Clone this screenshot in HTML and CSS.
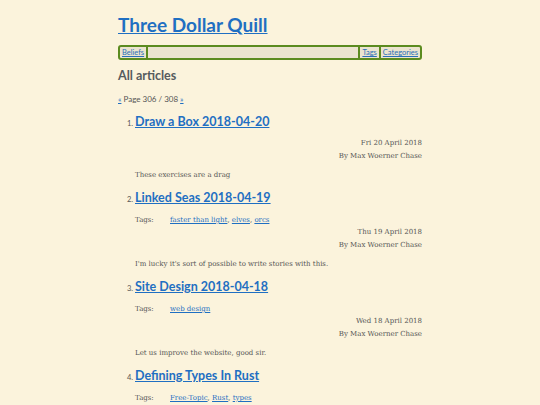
FILE: index.html
```html
<!DOCTYPE html>
<html lang="en">
<head>
<meta charset="utf-8">
<title>Three Dollar Quill</title>
<link rel="stylesheet" href="styles.css">
</head>
<body>
<div class="page">
  <h1 class="site-title"><a href="#">Three Dollar Quill</a></h1>
  <nav class="nav">
    <a class="nav-item" href="#">Beliefs</a>
    <span class="nav-item nav-spacer"></span>
    <a class="nav-item" href="#">Tags</a>
    <a class="nav-item" href="#">Categories</a>
  </nav>
  <h2 class="section-title">All articles</h2>
  <p class="pager"><a href="#">«</a> Page 306 / 308 <a href="#">»</a></p>
  <ol class="articles" start="1">
    <li class="article">
      <h3 class="article-title"><a href="#">Draw a Box 2018-04-20</a></h3>
      <div class="meta">
        <div class="meta-date">Fri 20 April 2018</div>
        <div class="meta-author">By Max Woerner Chase</div>
      </div>
      <p class="summary">These exercises are a drag</p>
    </li>
    <li class="article">
      <h3 class="article-title"><a href="#">Linked Seas 2018-04-19</a></h3>
      <div class="tags"><span class="tags-label">Tags:</span><span class="tags-list"><a href="#">faster than light</a>, <a href="#">elves</a>, <a href="#">orcs</a></span></div>
      <div class="meta">
        <div class="meta-date">Thu 19 April 2018</div>
        <div class="meta-author">By Max Woerner Chase</div>
      </div>
      <p class="summary">I'm lucky it's sort of possible to write stories with this.</p>
    </li>
    <li class="article">
      <h3 class="article-title"><a href="#">Site Design 2018-04-18</a></h3>
      <div class="tags"><span class="tags-label">Tags:</span><span class="tags-list"><a href="#">web design</a></span></div>
      <div class="meta">
        <div class="meta-date">Wed 18 April 2018</div>
        <div class="meta-author">By Max Woerner Chase</div>
      </div>
      <p class="summary">Let us improve the website, good sir.</p>
    </li>
    <li class="article">
      <h3 class="article-title"><a href="#">Defining Types In Rust</a></h3>
      <div class="tags"><span class="tags-label">Tags:</span><span class="tags-list"><a href="#">Free-Topic</a>, <a href="#">Rust</a>, <a href="#">types</a></span></div>
      <div class="meta">
        <div class="meta-date">Tue 17 April 2018</div>
        <div class="meta-author">By Max Woerner Chase</div>
      </div>
      <p class="summary">Some words about types.</p>
    </li>
  </ol>
</div>
</body>
</html>
```
FILE: styles.css
```css
html, body {
  margin: 0;
  padding: 0;
  background: #fbf3dc;
}
body {
  font-family: "DejaVu Serif", "Liberation Serif", serif;
  font-size: 7px;
  line-height: 13px;
  color: #555555;
}
a {
  color: #1f6fc2;
}
.page {
  width: 304px;
  margin: 0 auto;
  padding-top: 14px;
}
.site-title {
  margin: 0;
  font-family: Lato, "Open Sans", sans-serif;
  font-size: 19px;
  line-height: 22px;
  font-weight: 700;
}
.nav {
  display: flex;
  margin-top: 9px;
  height: 11px;
  border: 2px solid #5b8b1f;
  border-radius: 3px;
  background: #ebe4cf;
  font-family: Lato, "Open Sans", sans-serif;
  font-size: 7.5px;
  line-height: 11px;
}
.nav-item {
  padding: 0 2px;
  border-right: 2px solid #5b8b1f;
  color: #2a6fb8;
}
.nav-item:last-child {
  border-right: none;
}
.nav-spacer {
  flex: 1;
}
.section-title {
  margin: 8px 0 0;
  font-family: Lato, "Open Sans", sans-serif;
  font-size: 12.5px;
  line-height: 16px;
  font-weight: 700;
  color: #565b5e;
}
.pager {
  margin: 8.5px 0 9px;
  font-family: Lato, "Open Sans", sans-serif;
  font-size: 8px;
  line-height: 12.5px;
}
.articles {
  margin: 0;
  padding-left: 17px;
}
.article {
  font-family: Lato, "Open Sans", sans-serif;
  font-size: 7.5px;
}
.article-title {
  margin: 8px 0 0;
  font-family: Lato, "Open Sans", sans-serif;
  font-size: 12.5px;
  line-height: 15px;
  font-weight: 700;
}
.tags {
  display: flex;
  margin-top: 9px;
  font-family: "DejaVu Serif", serif;
  font-size: 7px;
  line-height: 12px;
}
.tags-label {
  width: 35px;
}
.meta {
  margin-top: 8px;
  text-align: right;
  font-family: "DejaVu Serif", serif;
  font-size: 7px;
}
.tags + .meta {
  margin-top: 0;
}
.summary {
  margin: 6px 0 0;
  font-family: "DejaVu Serif", serif;
  font-size: 7px;
}
```
